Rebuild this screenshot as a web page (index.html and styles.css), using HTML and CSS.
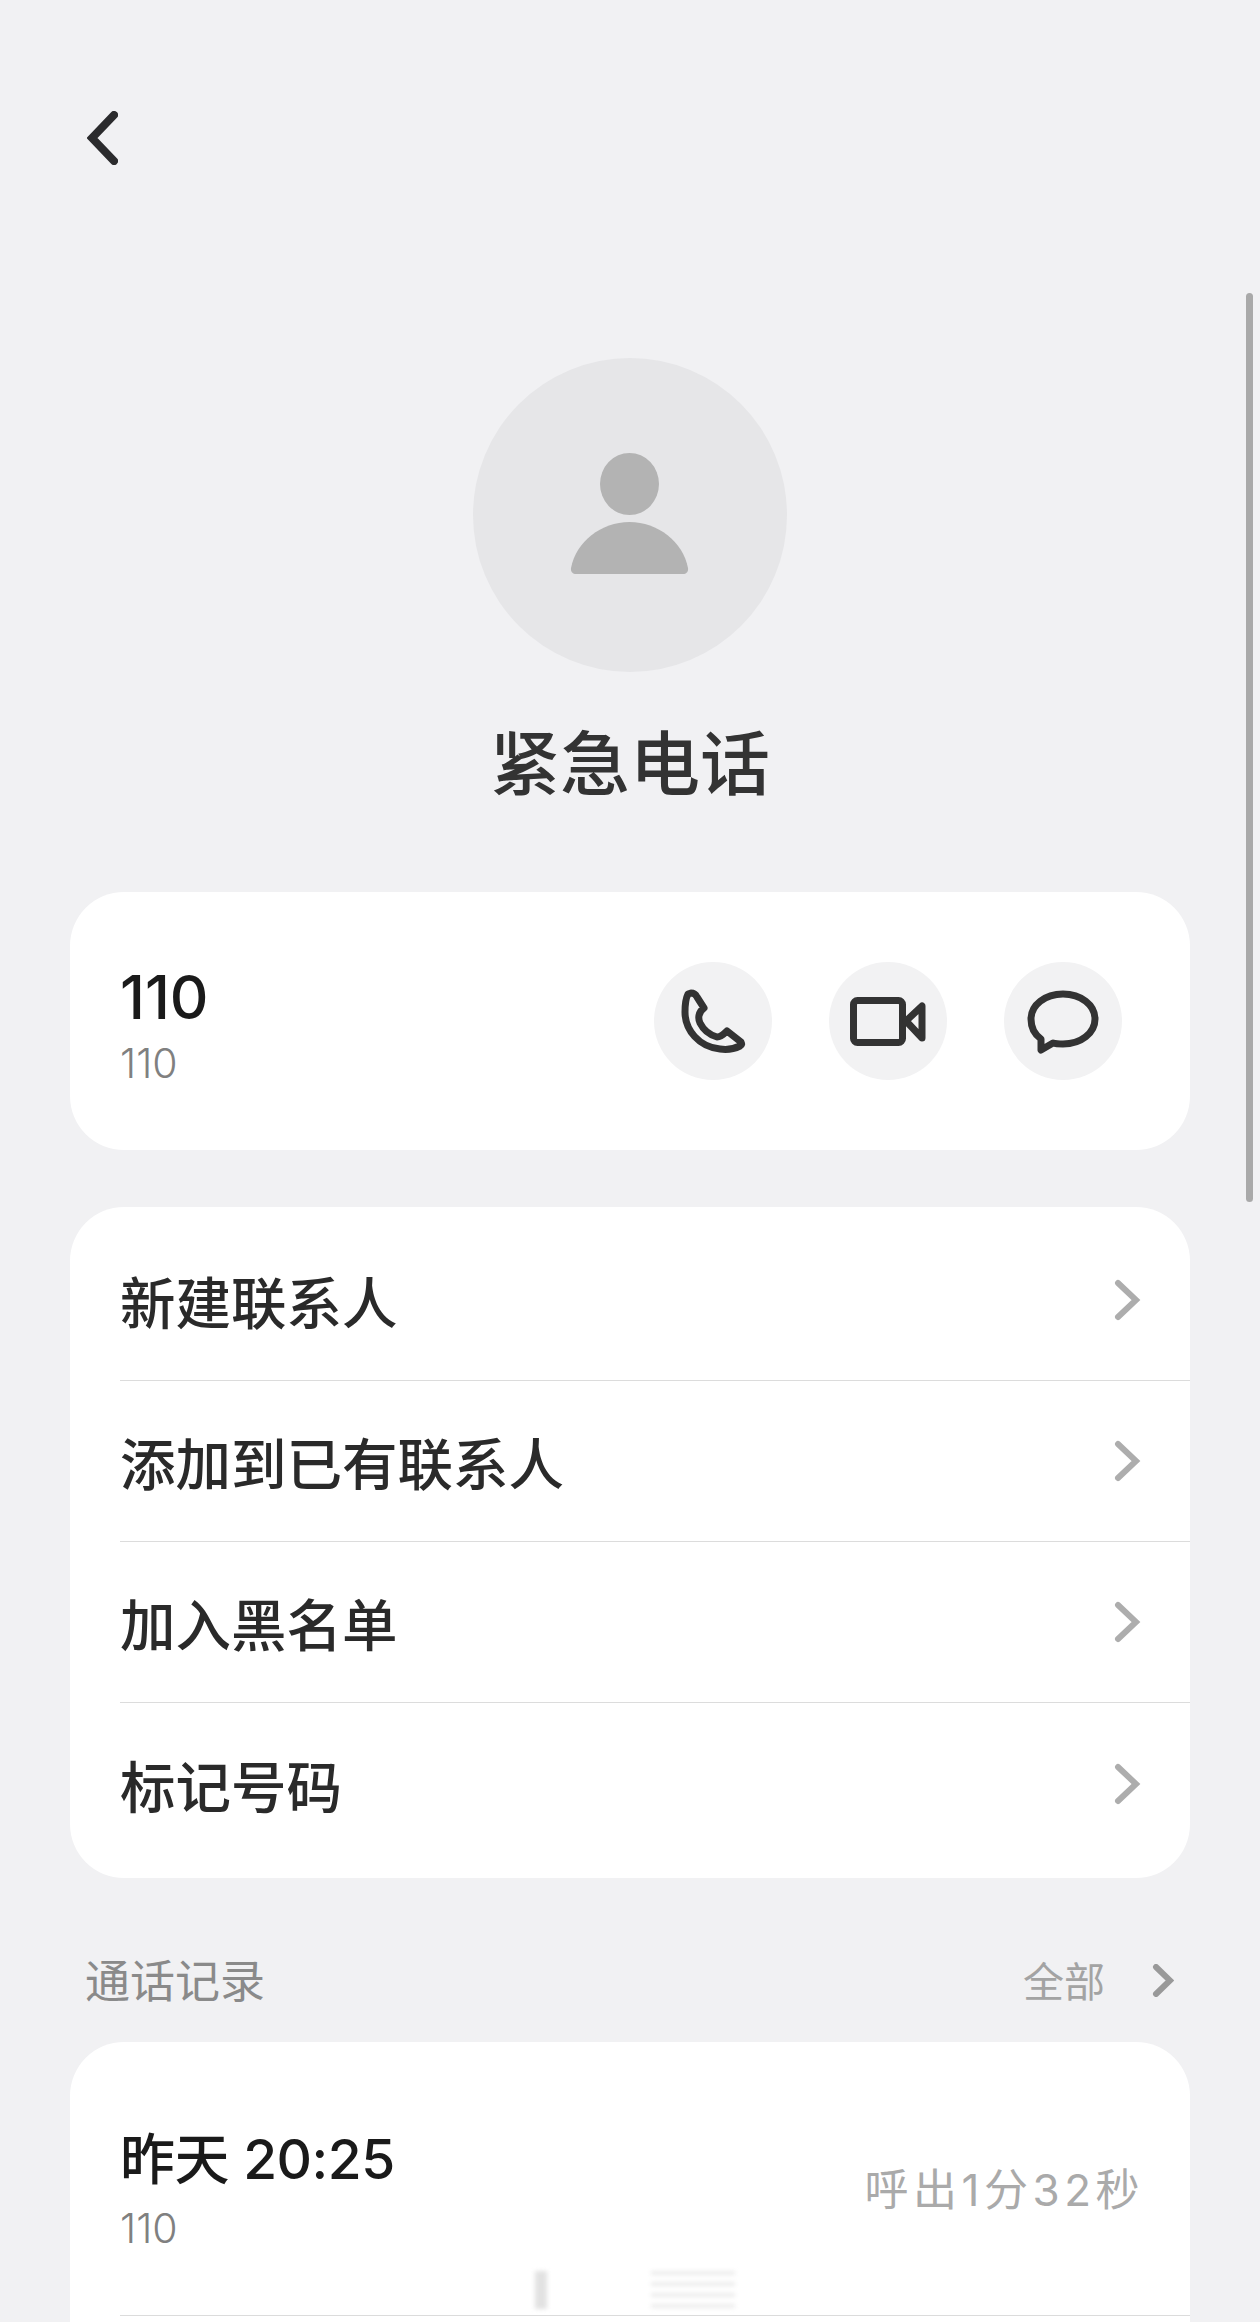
FILE: index.html
```html
<!DOCTYPE html>
<html lang="zh-CN">
<head>
    <meta charset="UTF-8">
    <meta name="viewport" content="width=device-width, initial-scale=1.0">
    <title>紧急电话</title>
    <link rel="stylesheet" href="styles.css">
</head>
<body>
    <div class="page">
        <div class="scrollbar"></div>

        <div class="top-bar">
            <svg class="back-icon" viewBox="0 0 31 54">
                <path d="M27 4 L5 27 L27 50" />
            </svg>
        </div>

        <div class="avatar">
            <svg viewBox="0 0 314 314">
                <ellipse cx="156.5" cy="126" rx="29.5" ry="31" />
                <path d="M98 210 C103 184 128 164 156.5 164 C185 164 210 184 215 210 C215.5 214 213 216 210 216 L103 216 C100 216 97.5 214 98 210 Z" />
            </svg>
        </div>
        <h1 class="contact-name">紧急电话</h1>

        <div class="card number-card">
            <div class="number-text">
                <div class="number-main">110</div>
                <div class="number-sub">110</div>
            </div>
            <div class="actions">
                <div class="action-btn">
                    <svg viewBox="0 0 118 118">
                        <path d="M37 31 C40 31 42 33 43 35 L50 46 C44 50 44 57 46 61 C50 69 56 73 63 75 C67 75 70 72 73 69 L87 80 C88 82 88 83 86 84 C80 87 73 88 66 87 C45 85 31 68 31 50 C31 42 32 36 34 32 Z" />
                    </svg>
                </div>
                <div class="action-btn">
                    <svg viewBox="0 0 118 118">
                        <rect x="24.5" y="38.5" width="49" height="42" rx="4" />
                        <path d="M77 59 L93 44 L93 76 Z" />
                    </svg>
                </div>
                <div class="action-btn">
                    <svg viewBox="0 0 118 118">
                        <path d="M37 88 L37 77 C30 72 27 65 27 57 C27 43 41 32 59 32 C77 32 91 43 91 57 C91 71 77 82 59 82 C55 82 52 82 49 81 Z" />
                    </svg>
                </div>
            </div>
        </div>

        <div class="card menu-card">
            <div class="menu-row">
                <span>新建联系人</span>
                <svg class="chevron" viewBox="0 0 27 42"><path d="M4 4 L22 21 L4 38" /></svg>
            </div>
            <div class="menu-row">
                <span>添加到已有联系人</span>
                <svg class="chevron" viewBox="0 0 27 42"><path d="M4 4 L22 21 L4 38" /></svg>
            </div>
            <div class="menu-row">
                <span>加入黑名单</span>
                <svg class="chevron" viewBox="0 0 27 42"><path d="M4 4 L22 21 L4 38" /></svg>
            </div>
            <div class="menu-row">
                <span>标记号码</span>
                <svg class="chevron" viewBox="0 0 27 42"><path d="M4 4 L22 21 L4 38" /></svg>
            </div>
        </div>

        <div class="section-head">
            <span class="section-title">通话记录</span>
            <span class="section-more">
                全部
                <svg class="chevron-small" viewBox="0 0 22 33"><path d="M4 3 L18 16.5 L4 30" /></svg>
            </span>
        </div>

        <div class="card log-card">
            <div class="log-row">
                <div>
                    <div class="log-time">昨天 20:25</div>
                    <div class="log-number">110</div>
                </div>
                <div class="log-status">呼出1分32秒</div>
                <div class="log-smudge"></div>
            </div>
        </div>
    </div>
</body>
</html>
```

FILE: styles.css
```css
* {
    box-sizing: border-box;
}
body {
    margin: 0;
    background-color: #f1f1f3;
    font-family: Inter, "Noto Sans CJK SC", sans-serif;
}
.page {
    position: relative;
    height: 2322px;
    overflow: hidden;
    padding: 0 70px;
}
.scrollbar {
    position: absolute;
    top: 293px;
    left: 1246px;
    width: 7px;
    height: 909px;
    border-radius: 4px;
    background-color: #a9a9a9;
}
.top-bar {
    padding: 111px 0 0 17px;
    height: 358px;
}
.back-icon {
    display: block;
    width: 31px;
    height: 54px;
}
.back-icon path {
    fill: none;
    stroke: #2b2b2d;
    stroke-width: 8;
    stroke-linecap: round;
    stroke-linejoin: miter;
}
.avatar {
    width: 314px;
    height: 314px;
    margin: 0 auto;
    border-radius: 50%;
    background-color: #e6e6e8;
}
.avatar svg {
    display: block;
    fill: #b3b3b3;
}
.contact-name {
    margin: 50px 0 0;
    height: 86px;
    line-height: 86px;
    text-align: center;
    font-size: 70px;
    font-weight: 500;
    color: #333;
}
.card {
    background-color: white;
    border-radius: 54px;
}
.number-card {
    display: flex;
    align-items: center;
    justify-content: space-between;
    height: 258px;
    margin-top: 84px;
    padding: 0 68px 0 50px;
}
.number-text {
    padding-top: 14px;
}
.number-main {
    font-size: 60px;
    font-weight: 500;
    line-height: 66px;
    color: #1a1a1a;
}
.number-sub {
    margin-top: 3px;
    font-size: 41px;
    font-weight: 300;
    line-height: 60px;
    color: #808080;
}
.actions {
    display: flex;
    gap: 57px;
}
.action-btn {
    width: 118px;
    height: 118px;
    border-radius: 50%;
    background-color: #f2f2f3;
}
.action-btn svg {
    display: block;
    fill: none;
    stroke: #333;
    stroke-width: 7;
    stroke-linejoin: round;
}
.menu-card {
    margin-top: 57px;
    padding: 13px 0 14px 50px;
}
.menu-row {
    display: flex;
    align-items: center;
    justify-content: space-between;
    height: 161px;
    padding: 0 49px 0 0;
    border-bottom: 1px solid #dcdcdc;
    font-size: 55.5px;
    font-weight: 500;
    color: #2a2a2a;
}
.menu-row:last-child {
    border-bottom: none;
}
.chevron {
    width: 27px;
    height: 42px;
}
.chevron path, .chevron-small path {
    fill: none;
    stroke: #adadad;
    stroke-width: 6;
    stroke-linecap: round;
}
.section-head {
    display: flex;
    align-items: center;
    justify-content: space-between;
    height: 60px;
    margin-top: 70px;
    padding: 0 16px 0 15px;
}
.section-title {
    font-size: 45px;
    color: #8a8a8a;
}
.section-more {
    display: flex;
    align-items: center;
    gap: 47px;
    padding-top: 2px;
    font-size: 41px;
    color: #a3a3a3;
}
.chevron-small {
    width: 22px;
    height: 33px;
    margin-top: 3px;
}
.chevron-small path {
    stroke: #999;
}
.log-card {
    height: 400px;
    margin-top: 34px;
    padding-left: 50px;
}
.log-row {
    position: relative;
    display: flex;
    align-items: center;
    justify-content: space-between;
    height: 274px;
    padding: 24px 46px 0 0;
    border-bottom: 1px solid #dcdcdc;
}
.log-time {
    font-size: 55px;
    font-weight: 500;
    line-height: 70px;
    letter-spacing: -0.5px;
    color: #1a1a1a;
}
.log-number {
    margin-top: 4px;
    font-size: 41px;
    font-weight: 300;
    line-height: 60px;
    color: #808080;
}
.log-status {
    margin-top: -7px;
    font-size: 44px;
    letter-spacing: 4.5px;
    color: #aaa;
}
/* 截图里底部那块模糊的水印 */
.log-smudge {
    position: absolute;
    left: 410px;
    bottom: 6px;
    width: 205px;
    height: 38px;
    background:
        linear-gradient(#e2e2e2, #e2e2e2) 5px 0 / 12px 100% no-repeat,
        repeating-linear-gradient(to bottom, #ececec 0 4px, white 4px 11px) 121px 0 / 84px 100% no-repeat;
    filter: blur(2px);
}
```
